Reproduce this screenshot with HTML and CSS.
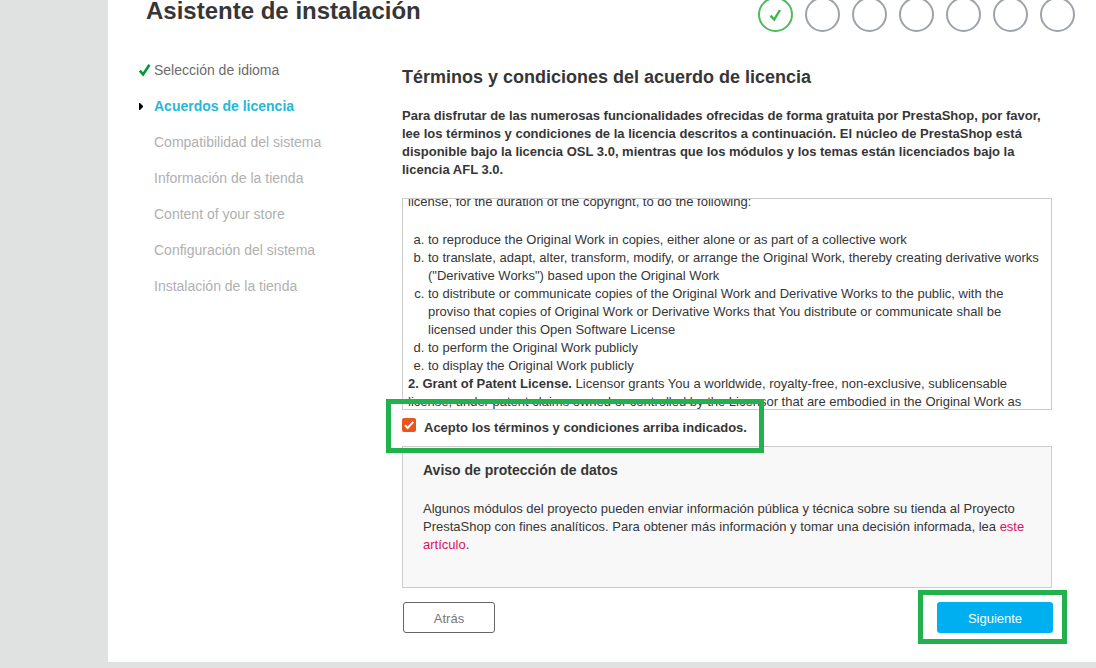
FILE: index.html
```html
<!DOCTYPE html>
<html lang="es">
<head>
<meta charset="utf-8">
<title>Asistente de instalación</title>
<link rel="stylesheet" href="styles.css">
</head>
<body>
<div class="panel">
  <header class="header">
    <h1 class="title">Asistente de instalación</h1>
    <div class="progress">
      <span class="dot dot-done"><svg width="13" height="14" viewBox="0 0 13 14"><path d="M1.5 7.6 L5.2 11.6 L11 2" fill="none" stroke="#3db550" stroke-width="2.4"/></svg></span>
      <span class="dot"></span><span class="dot"></span><span class="dot"></span><span class="dot"></span><span class="dot"></span><span class="dot"></span>
    </div>
  </header>
  <div class="columns">
    <ol class="steps">
      <li class="step done"><svg class="mark" width="14" height="14" viewBox="0 0 14 14"><path d="M1.8 7.6 L5.1 11.4 L11.4 1.8" fill="none" stroke="#009933" stroke-width="2.6"/></svg>Selección de idioma</li>
      <li class="step current"><svg class="mark" width="14" height="14" viewBox="0 0 14 14"><path d="M1 4 H2 L5 7 V8 L2 11 H1 Z" fill="#000"/></svg>Acuerdos de licencia</li>
      <li class="step">Compatibilidad del sistema</li>
      <li class="step">Información de la tienda</li>
      <li class="step">Content of your store</li>
      <li class="step">Configuración del sistema</li>
      <li class="step">Instalación de la tienda</li>
    </ol>
    <main class="content">
      <h2 class="heading">Términos y condiciones del acuerdo de licencia</h2>
      <p class="intro">Para disfrutar de las numerosas funcionalidades ofrecidas de forma gratuita por PrestaShop, por favor,<br>lee los términos y condiciones de la licencia descritos a continuación. El núcleo de PrestaShop está<br>disponible bajo la licencia OSL 3.0, mientras que los módulos y los temas están licenciados bajo la<br>licencia AFL 3.0.</p>
      <div class="license">
        <div class="license-text">
          <p>license, for the duration of the copyright, to do the following:</p>
          <ol class="grants">
            <li>to reproduce the Original Work in copies, either alone or as part of a collective work</li>
            <li>to translate, adapt, alter, transform, modify, or arrange the Original Work, thereby creating derivative works<br>("Derivative Works") based upon the Original Work</li>
            <li>to distribute or communicate copies of the Original Work and Derivative Works to the public, with the<br>proviso that copies of Original Work or Derivative Works that You distribute or communicate shall be<br>licensed under this Open Software License</li>
            <li>to perform the Original Work publicly</li>
            <li>to display the Original Work publicly</li>
          </ol>
          <p><strong>2. Grant of Patent License.</strong> Licensor grants You a worldwide, royalty-free, non-exclusive, sublicensable<br>license, under patent claims owned or controlled by the Licensor that are embodied in the Original Work as</p>
        </div>
      </div>
      <div class="accept">
        <span class="checkbox"><svg width="14" height="14" viewBox="0 0 14 14"><path d="M3 7.2 L5.7 10 L11.3 3.8" fill="none" stroke="#fff" stroke-width="2"/></svg></span>
        <span>Acepto los términos y condiciones arriba indicados.</span>
        <span class="highlight highlight-accept"></span>
      </div>
      <section class="notice">
        <h3 class="notice-title">Aviso de protección de datos</h3>
        <p>Algunos módulos del proyecto pueden enviar información pública y técnica sobre su tienda al Proyecto<br>PrestaShop con fines analíticos. Para obtener más información y tomar una decisión informada, lea <a class="link">este<br>artículo</a>.</p>
      </section>
      <div class="actions">
        <button class="button back">Atrás</button>
        <div class="next-wrap"><button class="button next">Siguiente</button><span class="highlight highlight-next"></span></div>
      </div>
    </main>
  </div>
</div>
</body>
</html>
```
FILE: styles.css
```css
* { box-sizing: border-box; }
body {
  margin: 0;
  height: 668px;
  overflow: hidden;
  background: #e0e2e1;
  color: #363636;
  font: 13px/18px "Liberation Sans", Arial, sans-serif;
}
h1, h2, h3, p, ol { margin: 0; padding: 0; }
.panel { margin-left: 108px; height: 662px; background: #fff; overflow: hidden; }
.header { display: flex; justify-content: space-between; height: 61px; padding: 0 21px 0 38px; }
.title { margin-top: -3px; font-size: 24px; line-height: 28px; }
.progress { display: flex; gap: 12px; margin-top: -3px; }
.dot { display: flex; align-items: center; justify-content: center; width: 35px; height: 35px; border: 2px solid #9ea3a9; border-radius: 50%; }
.dot-done { border-color: #4cbb5c; }
.columns { display: flex; }
.steps { width: 264px; margin-left: 30px; list-style: none; font-size: 14px; color: #b0b0b0; flex: none; }
.step { position: relative; height: 36px; padding-left: 16px; }
.done { color: #6c6c6c; }
.current { color: #25b9d7; font-weight: bold; }
.mark { position: absolute; left: 0; top: 2px; }
.content { width: 650px; }
.heading { margin-top: 5px; font-size: 18px; line-height: 22px; }
.intro { margin-top: 19px; font-weight: bold; }
.license { height: 212px; margin-top: 19px; border: 1px solid #ccc; overflow: hidden; }
.license-text { margin-top: -6px; padding-left: 5px; white-space: nowrap; }
.grants { margin-top: 20px; padding-left: 20px; list-style: lower-alpha; }
.accept { position: relative; display: flex; gap: 8px; height: 36px; padding-top: 9px; font-weight: bold; }
.checkbox { width: 14px; height: 14px; margin-top: -1px; border-radius: 2px; background: #e95420; }
.checkbox svg { display: block; }
.highlight { position: absolute; z-index: 1; border: 5px solid #22b14c; }
.highlight-accept { left: -16px; top: -11px; width: 378px; height: 54px; }
.notice { height: 142px; padding: 14px 20px; border: 1px solid #ccc; background: #f8f8f8; white-space: nowrap; }
.notice-title { margin-bottom: 21px; font-size: 14px; line-height: 18px; }
.link { color: #db1161; }
.actions { display: flex; justify-content: space-between; margin: 14px -1px 0 1px; }
.button { display: block; height: 31px; padding: 2px 0 0; border-radius: 3px; font: inherit; }
.back { width: 92px; border: 1px solid #666; background: #fff; color: #777; }
.next-wrap { position: relative; }
.next { width: 116px; border: 0; background: #00aff0; color: #fff; }
.highlight-next { left: -19px; top: -12px; width: 149px; height: 54px; }
```
